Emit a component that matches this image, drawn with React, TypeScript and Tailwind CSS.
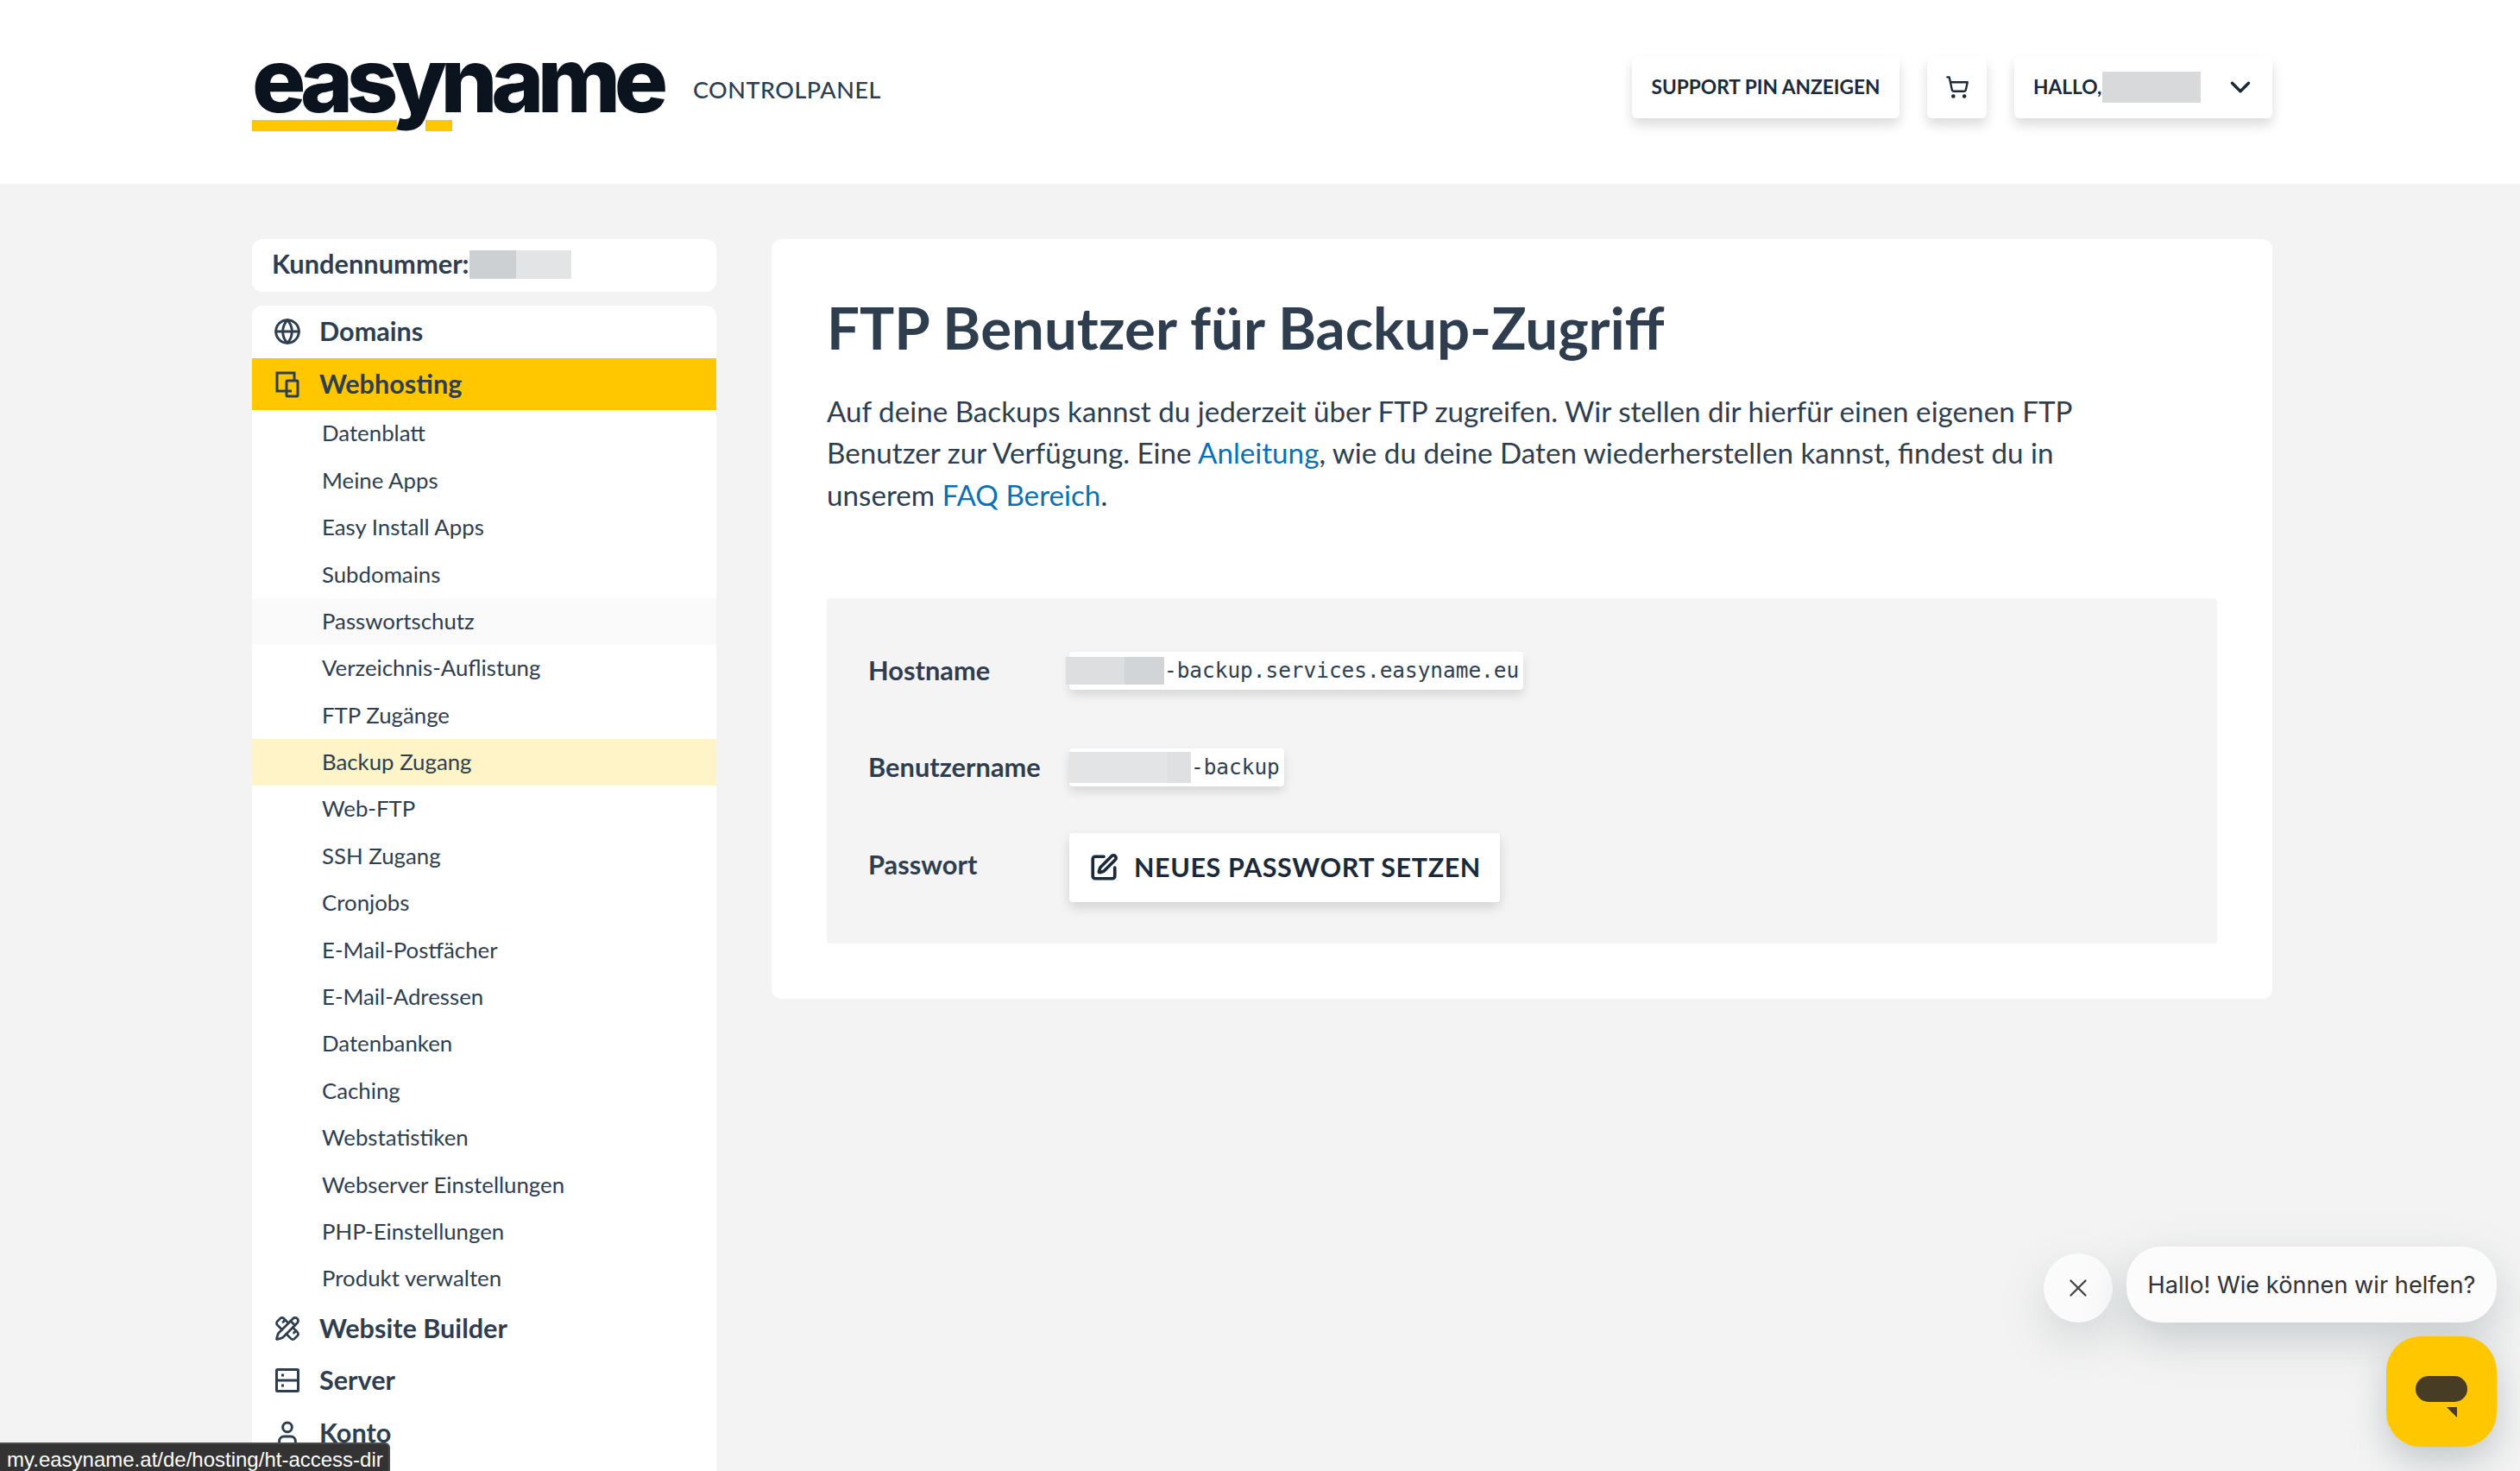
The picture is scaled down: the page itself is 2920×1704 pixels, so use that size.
import React from "react";
import { ChevronDown, Globe, PencilRuler, ShoppingCart, SquarePen, User, X } from "lucide-react";

const sub = ["Datenblatt","Meine Apps","Easy Install Apps","Subdomains","Passwortschutz","Verzeichnis-Auflistung","FTP Zugänge","Backup Zugang","Web-FTP","SSH Zugang","Cronjobs","E-Mail-Postfächer","E-Mail-Adressen","Datenbanken","Caching","Webstatistiken","Webserver Einstellungen","PHP-Einstellungen","Produkt verwalten"];

function Devices() {
  return (
    <svg viewBox="0 0 30 32" className="w-[30px] h-[32px]" fill="none" stroke="currentColor" strokeWidth="3">
      <path d="M20 24H3V3h20v8" />
      <rect x="14" y="12" width="13" height="18" rx="1" />
    </svg>
  );
}
function ServerIcon() {
  return (
    <svg viewBox="0 0 28 28" className="w-[28px] h-[28px]" fill="none" stroke="currentColor" strokeWidth="3">
      <rect x="1.5" y="1.5" width="25" height="25" rx="1" />
      <path d="M2 14h24" />
      <path d="M7 8h3M7 20h3" />
    </svg>
  );
}
function MainRow({ icon, label, active }: { icon: React.ReactNode; label: string; active?: boolean }) {
  return (
    <div className={`h-[60.5px] flex items-center pl-[25px] text-[30.6px] font-bold ${active ? "bg-[#ffc700]" : ""}`}>
      <span className="w-[32px] flex justify-center">{icon}</span>
      <span className="ml-[21px]">{label}</span>
    </div>
  );
}
function Masked({ children }: { children: React.ReactNode }) {
  return <div className="flex items-center bg-white rounded-[4px] h-[44px] shadow-[0_6px_12px_rgba(0,0,0,0.12)] font-['DejaVu_Sans_Mono',monospace] text-[24.4px] text-[#2f3e4e] pr-[5px]">{children}</div>;
}

export default function App() {
  return (
    <div className="w-[2920px] h-[1704px] overflow-hidden bg-[#f3f3f3] flex flex-col font-['Lato',sans-serif] text-[#2f3e4e] relative">
      <header className="h-[213px] bg-white pl-[292px] pr-[287px] flex items-start justify-between shrink-0">
        <div className="flex items-start">
          <div className="relative w-[479px] h-[82px] mt-[71px]">
            <div className="absolute left-0 top-[68px] w-[168px] h-[13px] bg-[#ffc700]" />
            <div className="absolute left-[201px] top-[68px] w-[31px] h-[13px] bg-[#ffc700]" />
            <div className="font-['Inter',sans-serif] font-extrabold text-[104px] leading-[82px] tracking-[-7.5px] text-[#0b141e] whitespace-nowrap relative -mt-[20px]">easyname</div>
          </div>
          <div className="ml-[32px] mt-[86px] text-[27px] leading-[36px] tracking-[0.5px] font-medium">CONTROLPANEL</div>
        </div>
        <div className="flex items-center gap-[32px] mt-[65px] text-[#1b2a38] text-[22.7px] font-bold">
          <div className="h-[72px] w-[310px] bg-white rounded-[6px] shadow-[0_8px_14px_rgba(0,0,0,0.14)] flex items-center justify-center">SUPPORT PIN ANZEIGEN</div>
          <div className="h-[72px] w-[69px] bg-white rounded-[6px] shadow-[0_8px_14px_rgba(0,0,0,0.14)] flex items-center justify-center"><ShoppingCart size={28} strokeWidth={2} /></div>
          <div className="h-[72px] w-[299px] bg-white rounded-[6px] shadow-[0_8px_14px_rgba(0,0,0,0.14)] flex items-center pl-[22px]">
            <span>HALLO,</span>
            <div className="w-[114px] h-[36px] bg-[#d8d9db] ml-[1px]" />
            <ChevronDown size={38} strokeWidth={2.2} className="ml-[27px]" />
          </div>
        </div>
      </header>

      <main className="flex-1 pl-[292px] pr-[287px] pt-[64px] flex gap-[64px] min-h-0">
        <aside className="w-[538px] shrink-0 flex flex-col gap-[16px]">
          <div className="h-[61px] bg-white rounded-[12px] flex items-center pl-[23px] text-[30.8px] font-bold pb-[2px]">
            <span>Kundennummer:</span>
            <div className="w-[54px] h-[33px] bg-[#cdd0d3]" />
            <div className="w-[64px] h-[33px] bg-[#e3e4e6]" />
          </div>
          <nav className="flex-1 bg-white rounded-t-[12px] overflow-hidden">
            <MainRow icon={<Globe size={32} strokeWidth={2.2} />} label="Domains" />
            <MainRow icon={<Devices />} label="Webhosting" active />
            {sub.map((s) => (
              <div key={s} className={`h-[54.4px] flex items-center pl-[81px] pb-[1px] text-[25.8px] ${s === "Backup Zugang" ? "bg-[#fff3c8]" : s === "Passwortschutz" ? "bg-[#fafafa]" : ""}`}>{s}</div>
            ))}
            <MainRow icon={<PencilRuler size={30} strokeWidth={2.2} />} label="Website Builder" />
            <MainRow icon={<ServerIcon />} label="Server" />
            <MainRow icon={<User size={34} strokeWidth={2.2} />} label="Konto" />
          </nav>
        </aside>

        <section className="flex-1 self-start h-[880px] bg-white rounded-[12px] px-[64px] pt-[60px]">
          <h1 className="text-[67.2px] leading-[84px] font-bold">FTP Benutzer für Backup-Zugriff</h1>
          <p className="mt-[31px] text-[33.2px] leading-[48.4px]">
            Auf deine Backups kannst du jederzeit über FTP zugreifen. Wir stellen dir hierfür einen eigenen FTP<br />
            Benutzer zur Verfügung. Eine <span className="text-[#0a70b5]">Anleitung</span>, wie du deine Daten wiederherstellen kannst, findest du in<br />
            unserem <span className="text-[#0a70b5]">FAQ Bereich</span>.
          </p>
          <div className="mt-[96px] h-[400px] bg-[#f4f4f4] rounded-[4px] pl-[48px] pt-[62px]">
            <div className="flex items-center h-[44px]">
              <div className="w-[233px] text-[30.8px] font-bold">Hostname</div>
              <Masked>
                <div className="w-[114px] h-[32px] -ml-[4px] flex"><div className="w-[68px] bg-[#dcdee0]" /><div className="flex-1 bg-[#d2d5d8]" /></div>
                -backup.services.easyname.eu
              </Masked>
            </div>
            <div className="flex items-center h-[44px] mt-[68px]">
              <div className="w-[233px] text-[30.8px] font-bold">Benutzername</div>
              <Masked>
                <div className="w-[141px] h-[36px] flex"><div className="w-[114px] bg-[#e3e4e6]" /><div className="flex-1 bg-[#dfe0e2]" /></div>
                -backup
              </Masked>
            </div>
            <div className="flex items-center h-[80px] mt-[54px]">
              <div className="w-[233px] text-[30.8px] font-bold -mt-[6px]">Passwort</div>
              <div className="w-[499px] h-[80px] bg-white rounded-[4px] shadow-[0_6px_14px_rgba(0,0,0,0.14)] flex items-center pl-[23px] text-[#1b2a38] text-[30.5px] font-bold tracking-[0.6px]">
                <SquarePen size={34} strokeWidth={2.6} />
                <span className="ml-[18px]">NEUES PASSWORT SETZEN</span>
              </div>
            </div>
          </div>
        </section>
      </main>

      <div className="absolute left-[2368px] top-[1452px] w-[80px] h-[80px] rounded-full bg-[#fbfbfc] flex items-center justify-center text-[#444] shadow-[0_20px_50px_rgba(120,135,140,0.25)]"><X size={34} strokeWidth={1.6} /></div>
      <div className="absolute left-[2464px] top-[1444px] w-[429px] h-[88px] rounded-[40px] bg-[#fcfcfd] flex items-center justify-center pt-[2px] font-['Inter',sans-serif] text-[#333] text-[27.2px] shadow-[0_20px_50px_rgba(120,135,140,0.35)]">Hallo! Wie können wir helfen?</div>
      <div className="absolute left-[2765px] top-[1548px] w-[128px] h-[128px] rounded-[40px] bg-[#ffc700] shadow-[0_16px_40px_rgba(120,135,140,0.4)]">
        <div className="absolute left-[34px] top-[46px] w-[60px] h-[30px] rounded-[15px] bg-[#473c24]" />
        <svg className="absolute left-[70px] top-[82px] w-[12px] h-[12px]" viewBox="0 0 12 12"><path d="M0 0h12v12z" fill="#473c24" /></svg>
      </div>
      <div className="absolute left-0 bottom-0 w-[452px] h-[33px] bg-[#333] rounded-tr-[6px] border-t-[2px] border-r-[2px] border-[#4a4a4a] text-white font-['Liberation_Sans',sans-serif] text-[24px] leading-[35px] pl-[8px] whitespace-nowrap">my.easyname.at/de/hosting/ht-access-dir</div>
    </div>
  );
}
